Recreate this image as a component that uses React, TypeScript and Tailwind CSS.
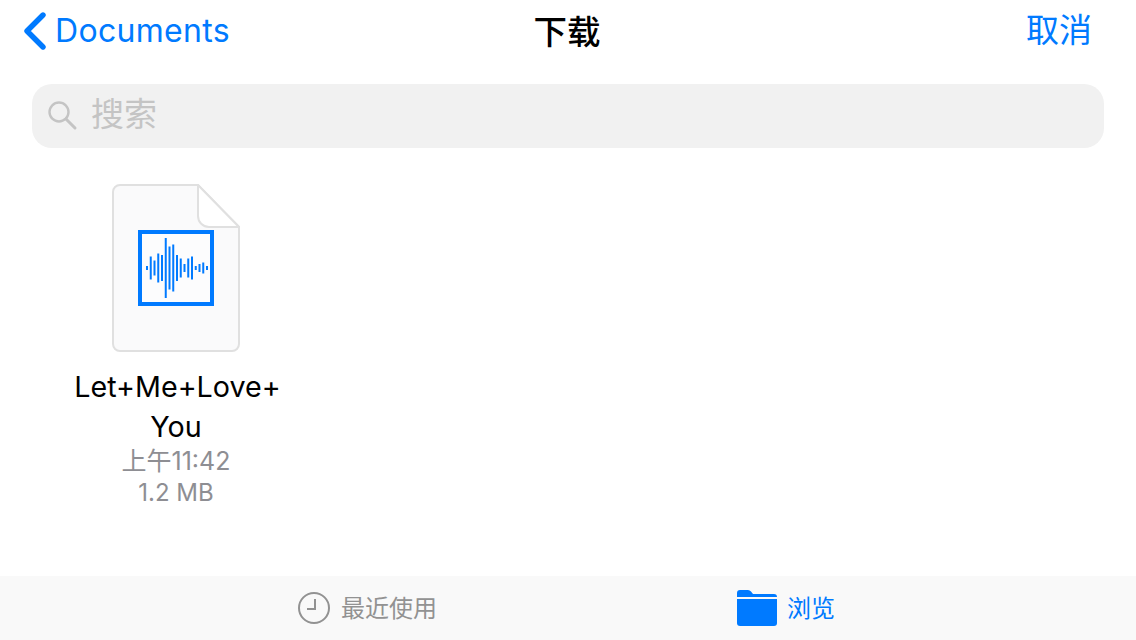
const font = { fontFamily: '"Inter", "Noto Sans CJK SC", sans-serif' }

// half heights of the waveform bars, left to right
const bars = [4, 23, 15, 29, 26, 60, 43, 47, 26, 19, 8, 19, 23, 4, 8, 11, 4]

function BackChevron() {
  return (
    <svg width="24" height="38" viewBox="0 0 24 38" fill="none" stroke="#007aff" strokeWidth="5.4" strokeLinecap="round" strokeLinejoin="round">
      <path d="M20 3 L4 19 L20 35" />
    </svg>
  )
}

function SearchIcon() {
  return (
    <svg width="30" height="30" viewBox="0 0 30 30" fill="none" stroke="#c4c4c4" strokeWidth="2.4" strokeLinecap="round">
      <circle cx="11" cy="11" r="9.5" />
      <path d="M18 18 L27 27" strokeWidth="3" />
    </svg>
  )
}

function AudioFileIcon() {
  return (
    <svg width="128" height="168" viewBox="0 0 128 168" className="block">
      <path
        d="M8 1 H86 L127 43 V160 a7 7 0 0 1 -7 7 H8 a7 7 0 0 1 -7 -7 V8 a7 7 0 0 1 7 -7 Z"
        fill="#fafafb"
        stroke="#e0e0e0"
        strokeWidth="2"
      />
      <path d="M86 1 V32 a11 11 0 0 0 11 11 H127 Z" fill="#ffffff" stroke="#e0e0e0" strokeWidth="2" strokeLinejoin="round" />
      <rect x="28" y="48" width="72" height="72" fill="#fcfcfd" stroke="#007aff" strokeWidth="4" />
      {bars.map((h, i) => (
        <rect key={i} x={34 + i * 3.75} y={84 - h / 2} width="2" height={h} fill="#007aff" />
      ))}
    </svg>
  )
}

function ClockIcon() {
  return (
    <svg width="32" height="32" viewBox="0 0 32 32" fill="none" stroke="#929292" strokeWidth="2">
      <circle cx="16" cy="16" r="15" />
      <path d="M17 7 V17 H9" />
    </svg>
  )
}

function FolderIcon() {
  return (
    <svg width="40" height="36" viewBox="0 0 40 36" fill="#007aff">
      <path d="M0 7 V3 a3 3 0 0 1 3 -3 H11 a4 4 0 0 1 3 1.5 L16 4 H37 a3 3 0 0 1 3 3 Z" />
      <path d="M0 9 H40 V33 a3 3 0 0 1 -3 3 H3 a3 3 0 0 1 -3 -3 Z" />
    </svg>
  )
}

export default function App() {
  return (
    <div className="flex flex-col w-full h-[640px] bg-white overflow-hidden" style={font}>
      {/* Nav bar */}
      <div className="grid grid-cols-[1fr_auto_1fr] items-center h-[64px] px-[44px] shrink-0">
        <div className="flex items-center gap-[8px] -ml-[21px] -mt-[3px] text-[#007aff]">
          <BackChevron />
          <span className="text-[32px] tracking-[0.3px]">Documents</span>
        </div>
        <div className="text-center text-[33.5px] font-medium -ml-[2px] text-black">下载</div>
        <div className="text-right text-[33px] -mt-[2px] text-[#007aff]">取消</div>
      </div>

      {/* Search */}
      <div className="flex items-center gap-[13px] h-[64px] mx-[32px] mt-[20px] px-[16px] rounded-[20px] bg-[#f1f1f1] shrink-0">
        <SearchIcon />
        <span className="text-[33px] -mt-[2px] text-[#c4c4c4]">搜索</span>
      </div>

      {/* Files */}
      <div className="flex-1 pt-[36px] pl-[40px]">
        <div className="flex flex-col items-center w-[272px]">
          <AudioFileIcon />
          <div className="mt-[15px] text-center text-[28.7px] leading-[40px] text-black">
            <span className="block pl-[3px]">Let+Me+Love+</span>
            You
          </div>
          <div className="-mt-[2px] text-[25px] leading-[32px] text-[#8e8e93]">上午11:42</div>
          <div className="text-[24px] leading-[32px] text-[#8e8e93]">1.2 MB</div>
        </div>
      </div>

      {/* Tab bar */}
      <div className="flex items-center gap-[300px] h-[64px] pl-[298px] bg-[#f9f9f9] shrink-0">
        <div className="flex items-center gap-[11px]">
          <ClockIcon />
          <span className="text-[24px] mt-[1px] text-[#929292]">最近使用</span>
        </div>
        <div className="flex items-center gap-[10px]">
          <FolderIcon />
          <span className="text-[24px] mt-[1px] text-[#007aff]">浏览</span>
        </div>
      </div>
    </div>
  )
}
